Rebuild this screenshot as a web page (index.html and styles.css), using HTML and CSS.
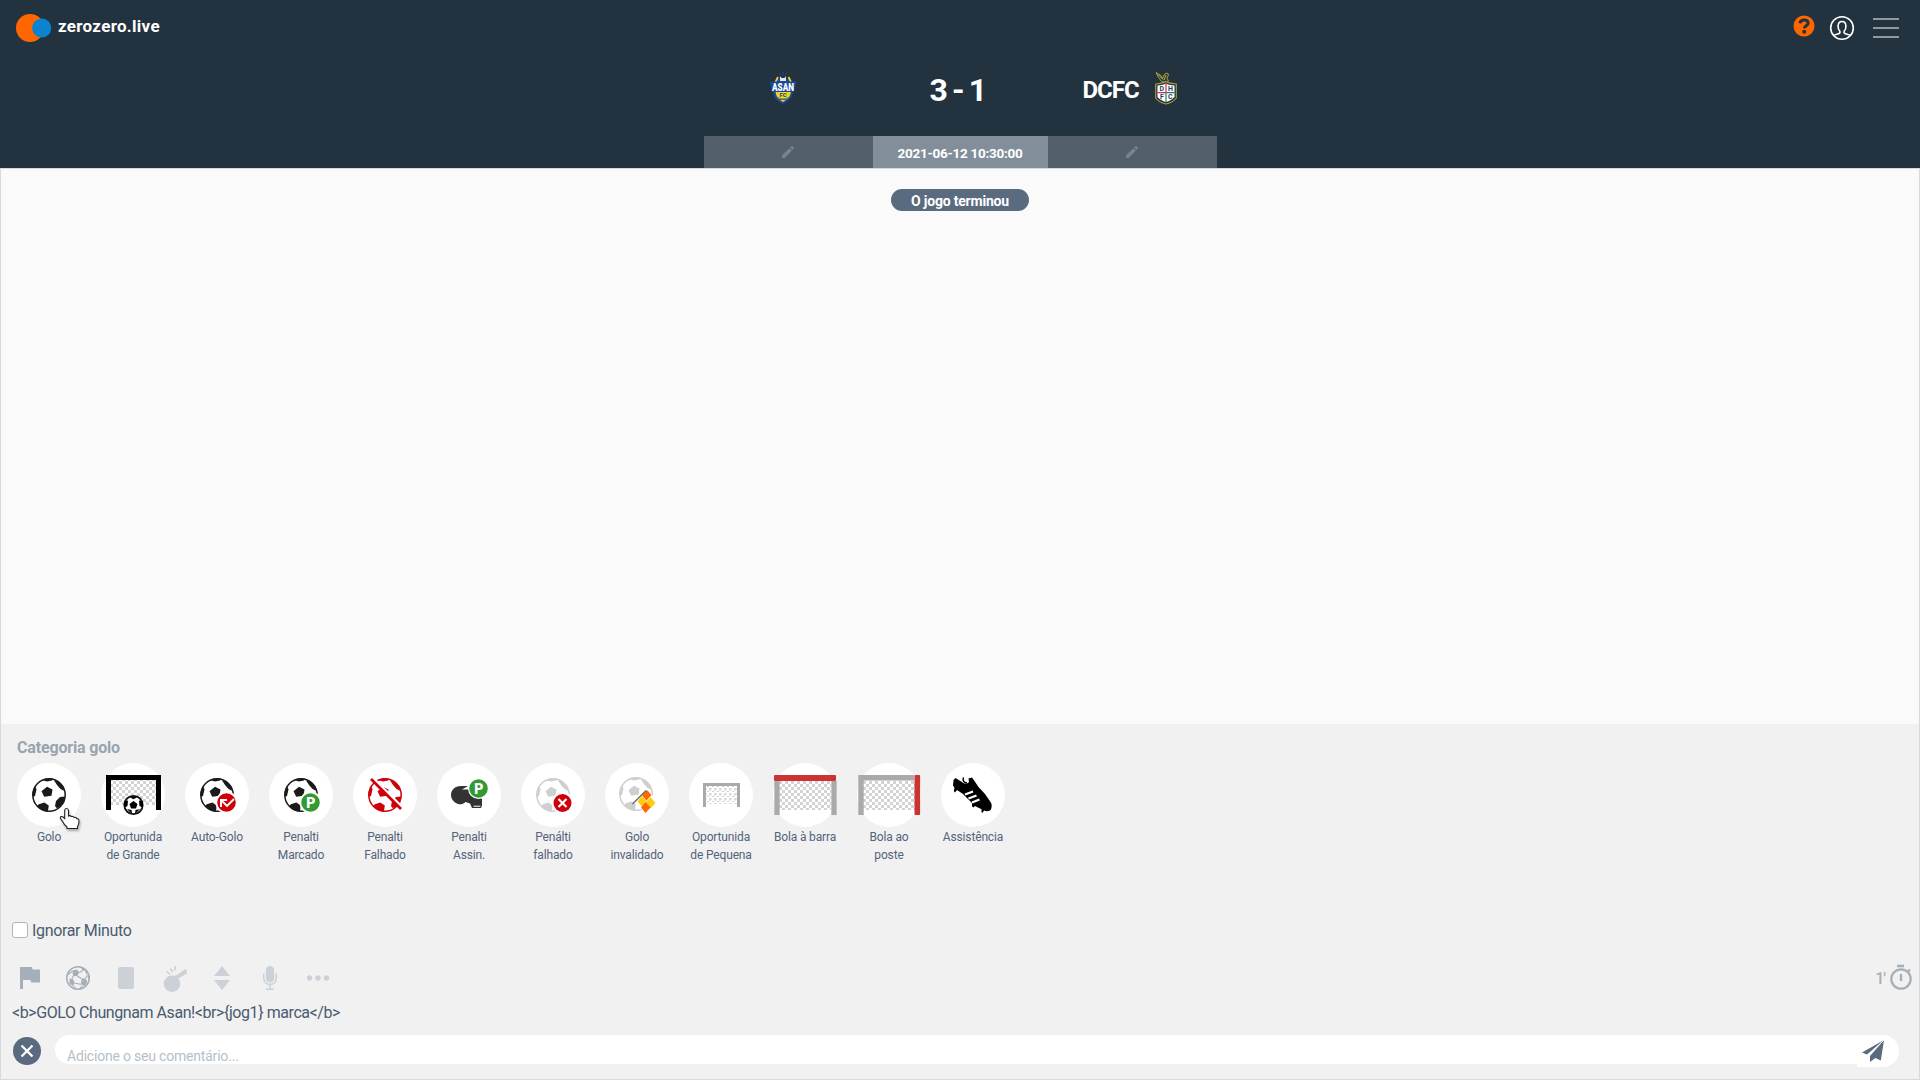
FILE: index.html
```html
<!DOCTYPE html>
<html lang="pt">
<head>
<meta charset="utf-8">
<title>zerozero.live</title>
<link rel="stylesheet" href="styles.css">
</head>
<body>
<svg class="defs" width="0" height="0" aria-hidden="true">
  <defs>
    <clipPath id="disc"><circle cx="17" cy="17" r="16.5"/></clipPath>
    <symbol id="ball" viewBox="0 0 34 34">
      <circle cx="17" cy="17" r="16.2" fill="none" stroke="currentColor" stroke-width="1.5"/>
      <g fill="currentColor" clip-path="url(#disc)">
        <path d="M9.500 13.200 15 8.800l5.500 2.700-1 6.200-7.300 1z"/>
        <path d="M10 2 14 0h8l-2 2.500-5 1z"/>
        <path d="M22 2.500l5 1 5 5 .5 4.500-4-2-3.500-4z"/>
        <path d="M0 9 3.500 9l1 2.500-1.500 6.500-3 1z"/>
        <path d="M6.800 26.200l5.500-1.700 4.500 3-1 7-9-2-2-4z"/>
        <path d="M33 18.500l-5 .5-4 4-1 5 1.500 2 2.500-.5 5-5z"/>
      </g>
    </symbol>
    <pattern id="net" width="6" height="6" patternUnits="userSpaceOnUse">
      <path d="M0 0h3v3H0zM3 3h3v3H3z" fill="#d3d3d3"/>
    </pattern>
    <pattern id="net-fine" width="5" height="5" patternUnits="userSpaceOnUse">
      <path d="M0 1h3M1 0v3M3 3.500h2" stroke="#cfcfcf" stroke-width="1" fill="none"/>
    </pattern>
  </defs>
</svg>

<header class="header">
  <div class="topbar">
    <div class="brand">
      <svg width="37" height="30" viewBox="0 0 37 30"><circle cx="15" cy="15" r="14" fill="#ff6600"/><circle cx="26.700" cy="15" r="9.600" fill="#0a84d0"/></svg>
      <span class="brand-name">zerozero.live</span>
    </div>
    <div class="actions">
      <svg class="help" width="22" height="22" viewBox="0 0 22 22"><circle cx="11" cy="11" r="10.500" fill="#ff6600"/><path d="M7 8.200C7.300 5.800 9 4.900 11.100 4.900c2.400 0 4.100 1.300 4.100 3.300 0 2.700-3.800 2.500-3.800 5" fill="none" stroke="#23323f" stroke-width="3"/><circle cx="11.200" cy="16.700" r="2" fill="#23323f"/></svg>
      <svg class="user" width="26" height="26" viewBox="0 0 26 26" fill="none" stroke="#fff" stroke-width="1.600"><circle cx="13" cy="13" r="11.300"/><path d="M4.600 20.500c1.500-1.300 4.200-1.200 5.900-2.200.7-.6.700-1.500.2-2.300-1.300-1.300-1.700-3-1.600-5 .1-2.700 1.600-4.500 3.900-4.500s3.800 1.800 3.900 4.500c.1 2-.3 3.700-1.600 5-.5.800-.5 1.700.2 2.300 1.700 1 4.400.9 5.900 2.200"/></svg>
      <div class="menu"><i></i><i></i><i></i></div>
    </div>
  </div>
  <div class="match">
    <div class="team home">
      <svg width="28" height="32" viewBox="0 0 28 32">
        <path d="M9 7 5 10l1 5-2 3c0 7 3 10 10 14 7-4 10-7 10-14l-2-3 1-5-4-3z" fill="#1b4a94"/>
        <path d="M6.500 18h15.500c0 6-3 9-8 12-5-3-7.500-6-7.500-12z" fill="#f2d21b"/>
        <path d="M9 5 6.500 10M19.500 5l2.500 5" stroke="#e9d03a" stroke-width="1.800"/>
        <path d="M11 4l1.500 2h3L17 4v5h-6z" fill="#dfe9f5"/><path d="M10 1l1.500 2M18 1l-1.500 2M14 0v3" stroke="#1f4f97"/>
        <path d="M.5 9.500h27L25 20H3z" fill="#1b4a94"/>
        <text x="14" y="18.500" class="crest-name" textLength="22" lengthAdjust="spacingAndGlyphs">ASAN</text>
        <text x="14" y="25" class="crest-fc">FC</text>
        <path d="M9 25.500c3 2 7 2 10 0M10 27.500h8" stroke="#4a6a80" fill="none"/>
      </svg>
    </div>
    <div class="score">3 - 1</div>
    <div class="team away">
      <span class="team-name">DCFC</span>
      <svg width="24" height="34" viewBox="0 0 24 34">
        <path d="M2 1.500l5 3 1.500 3 2-4.500 3-1 1 2-1.500 3 1.500 3-2 1.500-5-1-3-4z" fill="#2b3c46" stroke="#a79f36"/>
        <path d="M4 3.500l5 5M12 4l-2 5" stroke="#c9bf3b" stroke-width=".9"/>
        <path d="M12 10.500c3 2 6 2 10.300 2.500v14c-2 3-6 5-10.300 6-4.300-1-8.300-3-10.300-6V13c4.300-.5 7.300-.5 10.300-2.500z" fill="#23323f" stroke="#a9a236" stroke-width="1.100"/>
        <path d="M12 12.500c3 1.500 5.500 1.700 8.500 2v11.500c-2 2.500-5 4-8.500 5-3.500-1-6.500-2.500-8.500-5V14.500c3-.3 5.500-.5 8.500-2z" fill="#fff"/>
        <path d="M12 21.700v9M12.500 21.700h8" stroke="#247a66" stroke-width="1.200"/><path d="M3.500 21.700h8.500M12 12.500v9" stroke="#c9304a" stroke-width="1.200"/>
        <g class="crest-letter"><text x="7.700" y="20">D</text><text x="16.400" y="20">H</text><text x="7.900" y="27.800">F</text><text x="16.300" y="27.800">C</text></g>
      </svg>
    </div>
  </div>
  <div class="tabs">
    <div class="tab"><svg width="14" height="14" viewBox="3 3 18 18"><path d="M3 17.250V21h3.750L17.810 9.940l-3.750-3.750zM20.710 7.040a1 1 0 000-1.410l-2.340-2.340a1 1 0 00-1.410 0l-1.830 1.830 3.750 3.750z"/></svg></div>
    <div class="tab tab-active"><span>2021-06-12 10:30:00</span></div>
    <div class="tab"><svg width="14" height="14" viewBox="3 3 18 18"><path d="M3 17.250V21h3.750L17.810 9.940l-3.750-3.750zM20.710 7.040a1 1 0 000-1.410l-2.340-2.340a1 1 0 00-1.410 0l-1.830 1.830 3.750 3.750z"/></svg></div>
  </div>
</header>

<main class="main">
  <section class="feed"><div class="pill"><span>O jogo terminou</span></div></section>
  <section class="panel">
    <h2 class="title">Categoria golo</h2>
    <div class="events">
      <div class="event"><div class="disc"><svg width="64" height="64" viewBox="0 0 64 64" color="#1a1a1a"><use href="#ball" x="15" y="15" width="34" height="34"/></svg>
        <svg class="cursor" width="24" height="26" viewBox="0 0 24 26"><path d="M8.500 2.500c1.200 0 1.900.8 2 2V10c.8-.6 2.200-.5 2.700.6 1-.5 2.300-.2 2.800.9 1.200-.5 2.400 0 2.800 1.200 1.300-.2 2.200.6 2.200 1.800 0 3-.5 4.500-1.500 6v2H9v-1.500c-2-1.500-3.500-3.500-5-6.500-.8-1.300-1.700-1.800-1.700-2.700 0-1.300 1.700-1.600 2.700-.8l1.700 1.500V4.500c0-1.200.6-2 1.800-2z" fill="#fff" stroke="#222" stroke-width="1.100"/></svg></div><span>Golo</span></div>
      <div class="event"><div class="disc"><svg width="64" height="64" viewBox="0 0 64 64" color="#111"><path fill="url(#net)" d="M8 16h48v26H8z"/><path d="M7.500 47V14.500h50V47" fill="none" stroke="#000" stroke-width="5"/><circle cx="32.500" cy="42" r="10" fill="#fff"/><circle cx="32.500" cy="42" r="9.200" fill="none" stroke="#111" stroke-width="1.800"/><path d="M32.500 38l4 3-1.500 4.600h-5L28.500 41zM27.500 33.500h10l-5 2.800zM23 38.500l4-1-.5 5.500-3 1.500zM42 38.500l-4-1 .5 5.500 3 1.500zM26 46l4.500 1 .5 4zM39 46l-4.500 1-.5 4z"/></svg></div><span>Oportunida<br>de Grande</span></div>
      <div class="event"><div class="disc"><svg width="64" height="64" viewBox="0 0 64 64" color="#1a1a1a"><use href="#ball" x="15" y="15" width="34" height="34"/><circle cx="41.500" cy="39.500" r="11" fill="#fff"/><circle cx="41.500" cy="39.500" r="9.300" fill="#d0000b"/><path d="M36 44v-7h6M36 37l6 6 7-7" fill="none" stroke="#fff" stroke-width="1.900"/></svg></div><span>Auto-Golo</span></div>
      <div class="event"><div class="disc"><svg width="64" height="64" viewBox="0 0 64 64" color="#1a1a1a"><use href="#ball" x="15" y="15" width="34" height="34"/><circle cx="41.500" cy="39.500" r="11" fill="#fff"/><circle cx="41.500" cy="39.500" r="9.300" fill="#339933"/><text class="badge-p" x="41.800" y="44.700">P</text></svg></div><span>Penalti<br>Marcado</span></div>
      <div class="event"><div class="disc"><svg width="64" height="64" viewBox="0 0 64 64" color="#d0000b"><use href="#ball" x="15" y="15" width="34" height="34"/><path d="M20 15l30 30" stroke="#fff" stroke-width="2.500"/><path d="M18 16l30 30" stroke="#d0000b" stroke-width="2.600"/></svg></div><span>Penalti<br>Falhado</span></div>
      <div class="event"><div class="disc"><svg width="64" height="64" viewBox="0 0 64 64"><path d="M23.500 23H31l-6 3.500h9L45 36v6.500l-1 2.500H35l-2-4.500-4.500-1.500c-2 2-4 2.500-6 2.300-4-.5-8.500-4.300-8.500-9.300 0-5 4-9 9.500-9z" fill="#333"/><path d="M36.500 43.200h7" stroke="#fff"/><circle cx="41.500" cy="25.500" r="10.500" fill="#fff"/><circle cx="41.500" cy="25.500" r="9.300" fill="#339933"/><text class="badge-p" x="41.800" y="30.700">P</text></svg></div><span>Penalti<br>Assin.</span></div>
      <div class="event"><div class="disc"><svg width="64" height="64" viewBox="0 0 64 64" color="#cfcfcf"><use href="#ball" x="15" y="15" width="34" height="34"/><circle cx="41.500" cy="40" r="11" fill="#fff"/><circle cx="41.500" cy="40" r="9" fill="#d0000b"/><path d="M37.500 36l8 8m0-8l-8 8" stroke="#fff" stroke-width="2.200"/></svg></div><span>Penálti<br>falhado</span></div>
      <div class="event"><div class="disc"><svg width="64" height="64" viewBox="0 0 64 64" color="#cfcfcf"><use href="#ball" x="14" y="14" width="34" height="34"/><path d="M32 41l10-15 9 11-10 14z" fill="#fff"/><path d="M42 27l4.500 5-5 5.500L37 32.500z" fill="#ff6600"/><path d="M36.500 33l5 4.500-4 6.500-5-5.500z" fill="#fc1"/><path d="M45.500 34l5 6-5 5.500-5-6z" fill="#fc1"/><path d="M40.500 39l5 5.500-5 5.500-4.500-5.500z" fill="#ff6600"/><path d="M27.500 41 41 27.500" stroke="#666" stroke-width="1.300"/></svg></div><span>Golo<br>invalidado</span></div>
      <div class="event"><div class="disc"><svg width="64" height="64" viewBox="0 0 64 64"><path fill="url(#net-fine)" d="M17 23h31v18H17z"/><path d="M15.500 44V21.500h34V44" fill="none" stroke="#aaa" stroke-width="3"/></svg></div><span>Oportunida<br>de Pequena</span></div>
      <div class="event"><div class="disc"><svg width="64" height="64" viewBox="0 0 64 64"><path fill="url(#net)" d="M6 18h52v29H6z"/><path d="M4 18v34M61 18v34" stroke="#aaa" stroke-width="5.300"/><rect x="1" y="12" width="62" height="6" rx="1" fill="#c33"/></svg></div><span>Bola à barra</span></div>
      <div class="event"><div class="disc"><svg width="64" height="64" viewBox="0 0 64 64"><path fill="url(#net)" d="M6 18h52v29H6z"/><path d="M4 52V14.700h53" fill="none" stroke="#aaa" stroke-width="5.400"/><rect x="57.500" y="12" width="5.600" height="40" rx="1" fill="#c33"/></svg></div><span>Bola ao<br>poste</span></div>
      <div class="event"><div class="disc"><svg width="64" height="64" viewBox="0 0 64 64"><path d="M12.500 17l2-2 8 5c1.500 1 4 .8 5.500-1l-.5-3.500 3.500-1 3.500 5 3 4.500 6.500 7 5.500 8c1.500 2 1.500 4.500.5 7.500-1.500 2-5 2-7 1l-1.500 2.500-1-1v-2.700l-6.500-3.300-1.500 1.500-1.500-1v-3.500l-9-9-6-4-2 2.500-1.200-1.500.7-3-1.500-2.500z"/><path d="M22.500 14.500c-1 3 0 5 3.500 5.500" stroke="#000" stroke-width="1.500" fill="none"/><path d="M24 31.500l8-3M27.500 35.500l8-3M31 39.500l7.500-3" stroke="#fff" stroke-width="2.300"/></svg></div><span>Assistência</span></div>
    </div>
    <label class="ignore"><i class="box"></i><span>Ignorar Minuto</span></label>
    <div class="tools">
      <div class="toolset">
        <svg viewBox="0 0 28 28"><path d="M4 3h12l.6 2.500H24v13h-9L14.500 16H7v9H4z"/></svg>
        <svg viewBox="0 0 28 28" stroke="#a4afb9"><circle cx="14" cy="14" r="11.300" fill="none" stroke-width="1.500"/><path stroke="none" d="M8.500 6.500l4.500-1 2.300 3-2 3.500-4.300.2zM17.500 14.500l4-.2 2 4-3 4-3.500-2zM5.500 14.500l3.500.8 1.800 4L8.500 22l-3-2.500zM16.500 2.500l4 1.500 1 2.500-3 .2zM23.500 10.500l2 3-1.500 2z"/><path d="M15.300 8.500l3.200-1.800M21.500 6.500l1.500 4M13.300 12l4.200 2.500M9 12.200l-1 3M10.800 19.300l6.200 1M3.500 11l5-4M21.500 14.300l2-3M12 25l-3-3.500M18.500 22l-3 3" fill="none" stroke-width="1.100"/></svg>
        <svg class="dim" viewBox="0 0 28 28"><rect x="6" y="3" width="16" height="22" rx="2.500"/></svg>
        <svg class="dim" viewBox="0 0 28 28"><circle cx="12" cy="19.700" r="8.200"/><path d="M13 12.500l4-1.500 7.500-5.500 2.500.5-.3 3.500-8.200 5v4z"/><path d="M6.500 7.500l3.500 3M10.500 4.500l2 3.500M15.500 2l-.7 4.500" stroke="#cbd1d6" stroke-width="1.600"/></svg>
        <svg class="dim" viewBox="0 0 28 28"><path d="M14 2l8 10H6zM6 16h16l-8 10z"/></svg>
        <svg class="dim" viewBox="0 0 28 28"><rect x="9.800" y="2" width="8.400" height="16.500" rx="4.200"/><path d="M7.700 9.500V14c0 8.500 12.600 8.500 12.600 0V9.500M14 20v5M10 25.300h8" fill="none" stroke="#cbd1d6" stroke-width="1.600"/></svg>
        <svg class="dim" viewBox="0 0 28 28"><circle cx="5.500" cy="14" r="2.700"/><circle cx="14" cy="14" r="2.700"/><circle cx="22.500" cy="14" r="2.700"/></svg>
      </div>
      <div class="timer"><span>1'</span><svg width="24" height="28" viewBox="0 0 24 28"><path d="M8 3h7" stroke-width="2.600"/><circle cx="12" cy="16" r="9.700" stroke-width="2.200" fill="none"/><path d="M12 11v7M18.500 9l2.500-2.500" stroke-width="2.400"/></svg></div>
    </div>
    <div class="message">&lt;b&gt;GOLO Chungnam Asan!&lt;br&gt;{jog1} marca&lt;/b&gt;</div>
    <div class="composer">
      <svg width="28" height="28" viewBox="0 0 28 28"><circle cx="14" cy="14" r="14" fill="#5a6b80"/><path d="M8.500 8.500l11 11m0-11l-11 11" stroke="#fff" stroke-width="2.300"/></svg>
      <div class="input"><span>Adicione o seu comentário...</span></div>
      <div class="send"><svg width="24" height="24" viewBox="0 0 24 24"><path d="M1 13.500 23 1 6 15.500zM23 1l-3.200 20.500-5.500-2.500-5.300 4v-6z"/><path d="M23 1 7.500 15.800" stroke="#fff" stroke-width=".8"/></svg></div>
    </div>
  </section>
</main>
</body>
</html>
```
FILE: styles.css
```css
* { box-sizing: border-box; }
body { margin: 0; height: 1080px; display: flex; flex-direction: column; overflow: hidden; font-family: Roboto, "Liberation Sans", sans-serif; color: #4a5b70; }
svg { display: block; flex: none; }
.defs { position: absolute; }

.header { height: 168px; background: #23323f; display: flex; flex-direction: column; }
.topbar { height: 56px; display: flex; justify-content: space-between; align-items: center; padding: 0 21px 0 15px; }
.brand { display: flex; align-items: center; gap: 6px; }
.brand-name { color: #fff; font-weight: 700; font-size: 17px; line-height: 20px; letter-spacing: .3px; padding-bottom: 5px; }
.actions { display: flex; align-items: center; }
.help { margin: 0 14px 5px 0; }
.user { margin-right: 18px; }
.menu { width: 26px; display: flex; flex-direction: column; gap: 7px; }
.menu i { height: 2px; background: #8f989e; }

.match { height: 80px; display: grid; grid-template-columns: 169px 175px 169px; justify-content: center; color: #fff; font-weight: 700; }
.team { display: flex; padding-top: 15px; }
.home { padding-left: 65px; padding-top: 16px; }
.home svg { overflow: visible; }
.away { padding-left: 35px; gap: 14px; }
.team-name { font-size: 24px; line-height: 38px; letter-spacing: -1px; width: 57px; white-space: nowrap; }
.score { font-size: 32px; line-height: 68px; text-align: center; letter-spacing: -.8px; word-spacing: -2.200px; padding-right: 4px; }
.crest-name { font-size: 10px; font-weight: 900; fill: #fff; text-anchor: middle; }
.crest-fc { font-size: 6px; font-weight: 900; fill: #1e4f9c; text-anchor: middle; }
.crest-letter { font-size: 7px; font-weight: 700; fill: #23425e; text-anchor: middle; }

.tabs { height: 32px; display: grid; grid-template-columns: 169px 175px 169px; justify-content: center; }
.tab { background: #53606b; fill: #7a848c; display: flex; align-items: center; justify-content: center; }
.tab svg { width: 12px; height: 12px; }
.tab-active { background: #828f9b; color: #fff; font-size: 13.500px; font-weight: 700; letter-spacing: -.27px; white-space: nowrap; padding-top: 1px; }

.main { flex: 1; display: flex; flex-direction: column; border: 1px solid #d9d9d9; }
.feed { height: 555px; background: #fafafa; display: flex; justify-content: center; align-items: flex-start; padding-top: 20px; }
.pill { width: 138px; height: 22px; border-radius: 11px; background: #5a6b80; color: #fff; font-size: 14px; font-weight: 700; letter-spacing: -.2px; line-height: 25px; text-align: center; }
.panel { flex: 1; background: #f1f1f1; display: flex; flex-direction: column; }
.title { margin: 0; padding: 14px 0 0 16px; font-size: 16px; line-height: 20px; height: 39px; font-weight: 700; letter-spacing: -.17px; color: #98a4af; }
.events { display: flex; gap: 20px; padding-left: 16px; height: 159px; }
.event { width: 64px; display: flex; flex-direction: column; align-items: center; font-size: 12px; line-height: 18px; text-align: center; white-space: nowrap; letter-spacing: -.15px; gap: 1px; color: #53647b; }
.disc { width: 64px; height: 64px; border-radius: 50%; background: #fff; position: relative; }
.cursor { position: absolute; left: 41px; top: 43px; filter: drop-shadow(1px 2px 1px rgba(0,0,0,.3)); }
.badge-p { font-size: 14px; font-weight: 900; fill: #fff; text-anchor: middle; }

.ignore { display: flex; align-items: center; height: 16px; margin-left: 11px; gap: 4px; font-size: 16px; letter-spacing: -.34px; }
.box { width: 16px; height: 16px; border: 1px solid #bab2aa; border-radius: 3px; background: #fff; }
.tools { display: flex; justify-content: space-between; align-items: center; height: 28px; margin: 26px 6px 0 15px; }
.toolset { display: flex; gap: 20px; fill: #a4afb9; }
.toolset svg { width: 28px; height: 28px; }
.toolset .dim { fill: #cbd1d6; }
.timer { display: flex; align-items: center; gap: 4px; color: #a4afb9; stroke: #a4afb9; font-weight: 500; font-size: 16px; }
.timer span { stroke: none; letter-spacing: -1px; }
.timer svg { margin-bottom: 2px; }
.message { margin: 11px 0 0 11px; height: 20px; line-height: 20px; font-size: 16px; letter-spacing: -.43px; white-space: nowrap; }
.composer { display: flex; height: 32px; align-items: flex-start; margin: 12px 20px 0 12px; }
.composer > svg { margin-top: 2px; }
.input { flex: 1; height: 29px; margin-left: 14px; background: #fff; border-radius: 15px 0 0 15px; font-size: 14px; line-height: 42px; letter-spacing: -.2px; padding-left: 12px; color: #b5bfca; overflow: hidden; }
.send { width: 42px; height: 32px; background: #fff; border-radius: 0 16px 16px 0; padding: 4px 0 0 4px; fill: #5a6b80; }
```
